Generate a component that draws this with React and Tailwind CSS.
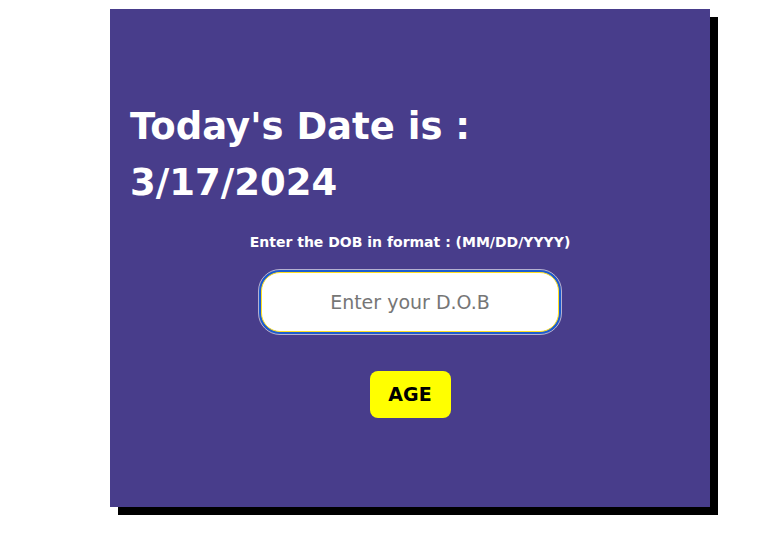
import { useState } from "react";

const comic = { fontFamily: '"Comic Sans MS", "DejaVu Sans", sans-serif' };

export default function App() {
  const [dob, setDob] = useState("");

  return (
    <div className="min-h-screen bg-white pt-[9px] pl-[110px]" style={comic}>
      <div className="w-[600px] h-[498px] bg-[#483D8B] shadow-[8px_8px_0_#000] pt-[90px] flex flex-col">
        {/* Heading */}
        <h1 className="px-5 text-[37px] leading-[56px] font-bold text-white">
          Today's Date is :
          <br />
          3/17/2024
        </h1>

        <p className="mt-[21px] text-center text-[14px] leading-5 font-bold text-white">
          Enter the DOB in format : (MM/DD/YYYY)
        </p>

        {/* DOB input */}
        <div className="mt-[20px] flex justify-center">
          <input
            value={dob}
            onChange={(e) => setDob(e.target.value)}
            placeholder="Enter your D.O.B"
            className="w-[298px] h-[60px] rounded-[19px] bg-white text-center text-[19px] text-gray-800 placeholder:text-[#767676] border border-yellow-300 ring-2 ring-[#1c5ccf] outline outline-1 outline-offset-2 outline-white/60"
            style={comic}
          />
        </div>

        <div className="mt-[39px] flex justify-center">
          <button
            className="w-[81px] h-[47px] rounded-lg bg-[#ffff00] text-black text-[19px] font-bold"
            style={comic}
          >
            AGE
          </button>
        </div>
      </div>
    </div>
  );
}
